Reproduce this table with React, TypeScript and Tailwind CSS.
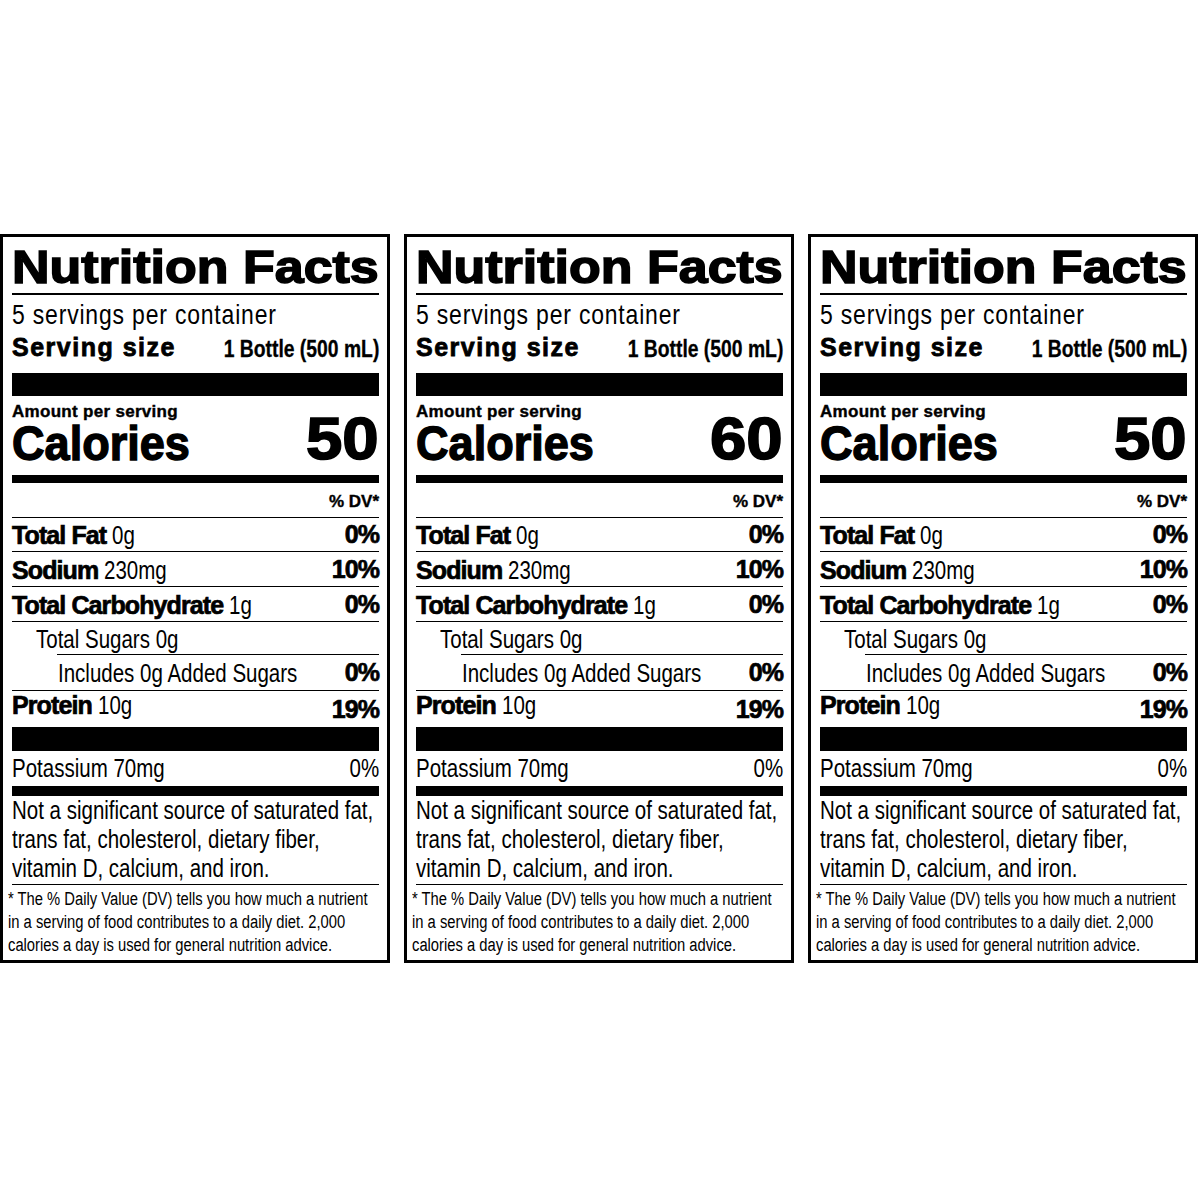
const heavy = "font-['Liberation_Sans',Arial,sans-serif] font-bold";
const narrow = "font-['Liberation_Sans',Arial,sans-serif]";

interface Row {
  label: string;
  amount: string;
  dv: string;
  box: string;
  lh: string;
  dvLh: string;
}

const rows: Row[] = [
  { label: "Total Fat", amount: "0g", dv: "0%", box: "h-[34px]", lh: "leading-[33px]", dvLh: "leading-[33px]" },
  { label: "Sodium", amount: "230mg", dv: "10%", box: "h-[35px]", lh: "leading-[34px]", dvLh: "leading-[34px]" },
  { label: "Total Carbohydrate", amount: "1g", dv: "0%", box: "h-[35px]", lh: "leading-[34px]", dvLh: "leading-[34px]" },
  { label: "", amount: "Total Sugars 0g", dv: "", box: "h-[33px] pl-[24px]", lh: "leading-[32px]", dvLh: "leading-[32px]" },
  { label: "", amount: "Includes 0g Added Sugars", dv: "0%", box: "h-[36px] ml-[45px] pl-[1px]", lh: "leading-[35px]", dvLh: "leading-[35px]" },
  { label: "Protein", amount: "10g", dv: "19%", box: "h-[37px]", lh: "leading-[27px]", dvLh: "leading-[36px]" },
];

function Panel({ calories }: { calories: string }) {
  return (
    <div className="w-[390px] h-[729px] shrink-0 border-[3px] border-black pl-[9px] pr-[8px] flex flex-col text-black bg-white">
      <div className="h-[56px] leading-[56px] text-[46px] whitespace-nowrap">
        <span className={`inline-block origin-left scale-x-[1.13] ${heavy} [-webkit-text-stroke:1.5px_black]`}>
          Nutrition Facts
        </span>
      </div>
      <div className="h-[2px] bg-black" />
      <div className={`h-[40px] leading-[40px] text-[28px] tracking-[1px] whitespace-nowrap origin-left scale-x-[0.82] ${narrow}`}>
        5 servings per container
      </div>
      <div className="h-[38px] flex justify-between items-start whitespace-nowrap">
        <span className={`text-[25px] leading-[25px] tracking-[1.5px] ${heavy} [-webkit-text-stroke:0.8px_black]`}>
          Serving size
        </span>
        <span className={`inline-block origin-right scale-x-[0.84] text-[23px] leading-[29px] ${heavy} [-webkit-text-stroke:0.3px_black]`}>
          1 Bottle (500 mL)
        </span>
      </div>
      <div className="h-[23px] bg-black" />
      <div className={`h-[31px] leading-[31px] text-[17px] tracking-[0.3px] ${heavy} [-webkit-text-stroke:0.4px_black]`}>
        Amount per serving
      </div>
      <div className="h-[48px] flex justify-between items-start whitespace-nowrap">
        <span className={`inline-block origin-left scale-x-[0.92] text-[49px] leading-[32px] ${heavy} [-webkit-text-stroke:1.4px_black]`}>
          Calories
        </span>
        <span className={`inline-block origin-right scale-x-[1.09] text-[60px] leading-[24px] ${heavy} [-webkit-text-stroke:1.6px_black]`}>
          {calories}
        </span>
      </div>
      <div className="h-[8px] bg-black" />
      <div className={`h-[34px] pt-[9px] leading-[20px] text-right text-[17px] ${heavy} [-webkit-text-stroke:0.4px_black]`}>
        % DV*
      </div>
      {rows.map((r) => (
        <div key={r.amount} className={`${r.box} border-t border-black flex items-start whitespace-nowrap`}>
          <span className={`flex-1 min-w-0 text-[25px] ${r.lh}`}>
            {r.label && (
              <span className={`${heavy} tracking-[-0.9px] [-webkit-text-stroke:0.7px_black]`}>{r.label} </span>
            )}
            <span className={`inline-block origin-left scale-x-[0.82] ${narrow}`}>{r.amount}</span>
          </span>
          {r.dv && (
            <span className={`shrink-0 text-[25px] ${r.dvLh} ${heavy} tracking-[-0.9px] [-webkit-text-stroke:0.7px_black]`}>
              {r.dv}
            </span>
          )}
        </div>
      ))}
      <div className="h-[24px] bg-black" />
      <div className={`h-[35px] leading-[35px] text-[25px] flex justify-between whitespace-nowrap ${narrow}`}>
        <span className="inline-block origin-left scale-x-[0.82]">Potassium 70mg</span>
        <span className="inline-block origin-right scale-x-[0.82]">0%</span>
      </div>
      <div className="h-[10px] bg-black" />
      <div className={`h-[88px] leading-[29px] text-[25px] whitespace-nowrap origin-left scale-x-[0.82] ${narrow}`}>
        <div>Not a significant source of saturated fat,</div>
        <div>trans fat, cholesterol, dietary fiber,</div>
        <div>vitamin D, calcium, and iron.</div>
      </div>
      <div className="h-px bg-black" />
      <div className={`h-[75px] pt-[3px] -ml-[4px] leading-[23px] text-[18px] whitespace-nowrap origin-left scale-x-[0.82] ${narrow}`}>
        <div>* The % Daily Value (DV) tells you how much a nutrient</div>
        <div>in a serving of food contributes to a daily diet. 2,000</div>
        <div>calories a day is used for general nutrition advice.</div>
      </div>
    </div>
  );
}

export default function App() {
  return (
    <div className="w-[1200px] h-[1200px] bg-white pt-[234px] flex gap-[14px] overflow-hidden">
      <Panel calories="50" />
      <Panel calories="60" />
      <Panel calories="50" />
    </div>
  );
}
